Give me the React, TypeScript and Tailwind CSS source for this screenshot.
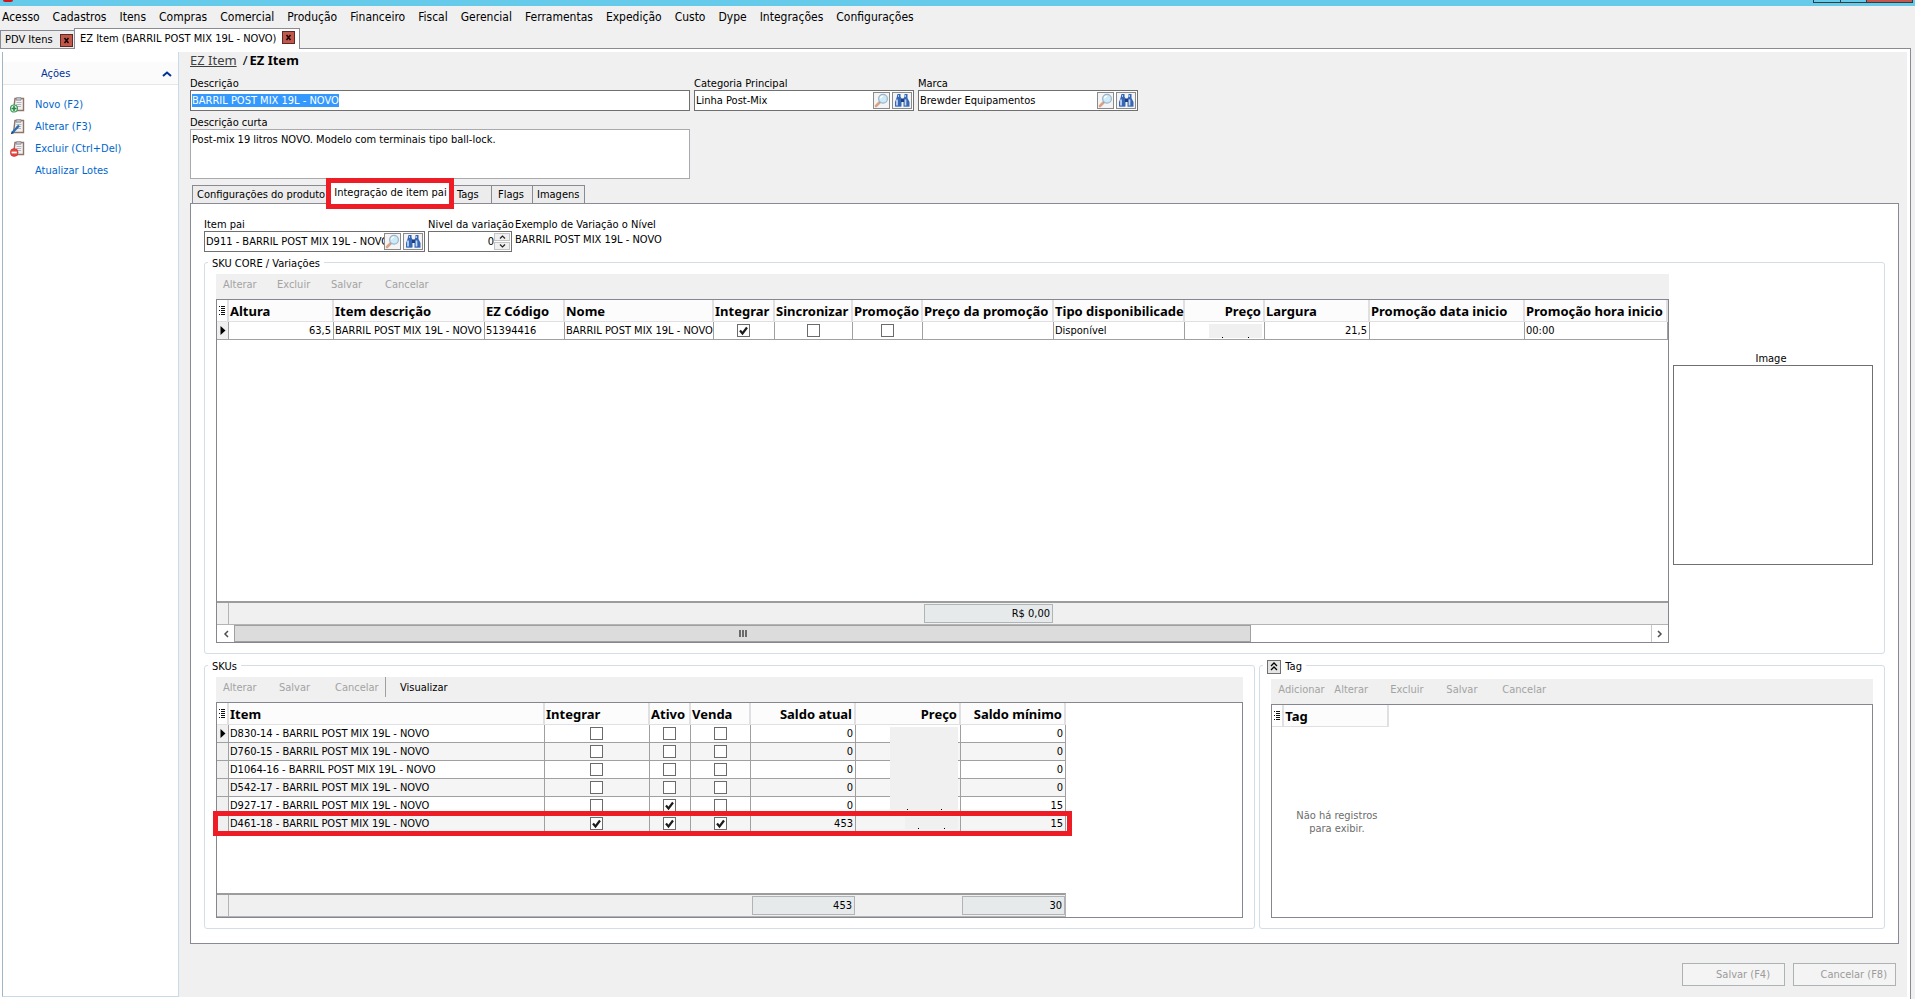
import { useEffect, useRef, useState } from 'react';
import type { ReactNode } from 'react';
import clsx from 'clsx';

const MENU = [
  'Acesso', 'Cadastros', 'Itens', 'Compras', 'Comercial', 'Produção', 'Financeiro', 'Fiscal',
  'Gerencial', 'Ferramentas', 'Expedição', 'Custo', 'Dype', 'Integrações', 'Configurações',
];

const ACTIONS: Array<{ label: string; icon?: 'add' | 'edit' | 'remove' }> = [
  { label: 'Novo (F2)', icon: 'add' },
  { label: 'Alterar (F3)', icon: 'edit' },
  { label: 'Excluir (Ctrl+Del)', icon: 'remove' },
  { label: 'Atualizar Lotes' },
];

type Sku = {
  item: string;
  integrar: boolean;
  ativo: boolean;
  venda: boolean;
  saldo: number;
  minimo: number;
};

const SKUS: Sku[] = [
  { item: 'D830-14 - BARRIL POST MIX 19L - NOVO', integrar: false, ativo: false, venda: false, saldo: 0, minimo: 0 },
  { item: 'D760-15 - BARRIL POST MIX 19L - NOVO', integrar: false, ativo: false, venda: false, saldo: 0, minimo: 0 },
  { item: 'D1064-16 - BARRIL POST MIX 19L - NOVO', integrar: false, ativo: false, venda: false, saldo: 0, minimo: 0 },
  { item: 'D542-17 - BARRIL POST MIX 19L - NOVO', integrar: false, ativo: false, venda: false, saldo: 0, minimo: 0 },
  { item: 'D927-17 - BARRIL POST MIX 19L - NOVO', integrar: false, ativo: true, venda: false, saldo: 0, minimo: 15 },
  { item: 'D461-18 - BARRIL POST MIX 19L - NOVO', integrar: true, ativo: true, venda: true, saldo: 453, minimo: 15 },
];

function ClipboardIcon({ kind }: { kind: 'add' | 'edit' | 'remove' }) {
  return (
    <svg width="15" height="16" viewBox="0 0 15 16" aria-hidden="true">
      <path d="M5 1.500h8.500v12H3.500z" fill="#f1f1f2" stroke="#8f7468" strokeWidth="1.400" />
      <path d="M6.500.6h4.500v2.600H6z" fill="#c3c3c8" stroke="#85858c" strokeWidth=".7" />
      <path d="M6.500 5.500h5M6.200 7.500h5M6 9.500h5" stroke="#b4b4ba" />
      {kind === 'add' && (
        <>
          <circle cx="4" cy="11.500" r="3.500" fill="#e9f7ec" stroke="#3f9a58" strokeWidth="1.200" />
          <path d="M4 9v5M1.500 11.500h5" stroke="#1f8a40" strokeWidth="1.600" />
        </>
      )}
      {kind === 'edit' && (
        <>
          <path d="M2.500 13.500L9 6.500" stroke="#2a6fb5" strokeWidth="2.400" />
          <path d="M.8 15.300l1-3 2 2z" fill="#16365c" />
        </>
      )}
      {kind === 'remove' && (
        <>
          <circle cx="4.200" cy="11.500" r="3.900" fill="#e5463f" stroke="#c42a26" strokeWidth=".6" />
          <path d="M1.600 11.500h5.200" stroke="#fff" strokeWidth="1.800" />
        </>
      )}
    </svg>
  );
}

function MagnifierIcon() {
  return (
    <svg width="15" height="15" viewBox="0 0 15 15" aria-hidden="true">
      <path d="M2 13l4-4" stroke="#d8a488" strokeWidth="2.600" strokeLinecap="round" />
      <path d="M5.500 9.500l1-1" stroke="#8d8d95" strokeWidth="1.600" />
      <circle cx="9" cy="5.800" r="4.400" fill="#cdeaf8" stroke="#9db4c8" strokeWidth="1.200" />
      <path d="M6.500 5.500a2.600 2.600 0 0 1 2.500-2.300" stroke="#fff" fill="none" strokeWidth="1.200" />
    </svg>
  );
}

function BinocularsIcon() {
  return (
    <svg width="17" height="15" viewBox="0 0 17 15" aria-hidden="true">
      <path d="M3.500 1h3v2.500l1 2v8h-6.500V9l1.500-4z" fill="#3766b4" />
      <path d="M10.500 1h3v4L15.500 9v4.500H9.500v-8l1-2z" fill="#3766b4" />
      <path d="M7 5.500h3v3.500H7z" fill="#1d3f80" />
      <path d="M3 6.500v6M11.500 6.500v6" stroke="#c3daf7" strokeWidth="1.700" />
      <path d="M4.500 2v2M11.500 2v2" stroke="#a9c6ef" />
      <path d="M1.500 13.500h5.500M9.800 13.500h5.400" stroke="#6b93cf" />
    </svg>
  );
}

function MenuLinesIcon() {
  return (
    <svg width="7" height="11" viewBox="0 0 7 11" className="mx-auto" aria-hidden="true">
      <path d="M0 1.500h1M0 5.500h1M0 9.500h1M2 1.500h4M2 3.500h4M2 5.500h4M2 7.500h4M2 9.500h4" stroke="#111" />
    </svg>
  );
}

function RowPointer() {
  return (
    <svg width="6" height="9" viewBox="0 0 6 9" className="mx-auto" aria-hidden="true">
      <path d="M0.500 0v9L5.500 4.500z" fill="#000" />
    </svg>
  );
}

function CheckCell({ label, checked }: { label: string; checked: boolean }) {
  const [on, setOn] = useState(checked);
  return (
    <span className="mx-auto grid h-[13px] w-[13px]">
      <input
        type="checkbox"
        aria-label={label}
        checked={on}
        onChange={(e) => setOn(e.target.checked)}
        className="col-start-1 row-start-1 h-[13px] w-[13px] appearance-none border border-[#6b6b6b] bg-white"
      />
      {on && (
        <svg viewBox="0 0 13 13" className="pointer-events-none col-start-1 row-start-1 h-[13px] w-[13px]" aria-hidden="true">
          <path d="M3 6.500l2.500 3 4.500-6" fill="none" stroke="#1c1c1c" strokeWidth="2.200" />
        </svg>
      )}
    </span>
  );
}

function FieldLabel({ htmlFor, children }: { htmlFor: string; children: ReactNode }) {
  return (
    <label htmlFor={htmlFor} className="h-3.5 leading-4 whitespace-nowrap">
      {children}
    </label>
  );
}

function LookupField({ id, label, value, className }: { id: string; label: string; value: string; className?: string }) {
  return (
    <div className={clsx('flex flex-col', className)}>
      <FieldLabel htmlFor={id}>{label}</FieldLabel>
      <div className="flex h-[21px] items-center border border-[#707070] bg-white pr-px">
        <input id={id} defaultValue={value} className="h-full min-w-0 flex-1 pl-px outline-none" />
        <button type="button" aria-label={`Pesquisar ${label}`} className="flex h-[17px] w-[17px] items-center justify-center border border-[#8a8a8a] bg-[#f4f4f4]">
          <MagnifierIcon />
        </button>
        <button type="button" aria-label={`Localizar ${label}`} className="ml-0.5 flex h-[17px] w-5 items-center justify-center border border-[#8a8a8a] bg-[#f4f4f4]">
          <BinocularsIcon />
        </button>
      </div>
    </div>
  );
}

function ToolbarButton({ children, className = 'w-14', disabled = true }: { children: ReactNode; className?: string; disabled?: boolean }) {
  return (
    <button
      type="button"
      disabled={disabled}
      className={clsx('text-left leading-[22px] whitespace-nowrap text-black disabled:text-[#a3a3a3]', className)}
    >
      {children}
    </button>
  );
}

function Toolbar({ children }: { children: ReactNode }) {
  return <div className="flex h-[25px] shrink-0 items-start bg-[#f0f0f0] pl-[7px]">{children}</div>;
}

function Th({ children, right }: { children?: ReactNode; right?: boolean }) {
  return (
    <th
      className={clsx(
        "h-[22px] border-r-2 border-b border-[#e0e0e2] bg-[#fcfcfc] pr-0.5 pl-px font-['Noto_Sans',sans-serif] text-[13px] leading-5 font-bold whitespace-nowrap",
        right ? 'text-right' : 'text-left',
      )}
    >
      {children}
    </th>
  );
}

function Td({ children, right }: { children?: ReactNode; right?: boolean }) {
  return (
    <td className={clsx('h-[18px] overflow-hidden border-r border-b border-[#a0a0a0] pr-0.5 pl-px leading-[17px] whitespace-nowrap', right && 'text-right')}>
      {children}
    </td>
  );
}

function SumBox({ children, className }: { children: ReactNode; className: string }) {
  return (
    <output className={clsx('block h-[19px] border border-[#b0b4b6] bg-[#e6eaeb] pr-0.5 text-right leading-[18px]', className)}>
      {children}
    </output>
  );
}

function CloseButton({ label }: { label: string }) {
  return (
    <button type="button" aria-label={label} className="flex h-[13px] w-[13px] items-center justify-center border border-[#5c2a24] bg-[#c2574b]">
      <svg width="7" height="7" viewBox="0 0 7 7" aria-hidden="true">
        <path d="M1.500 1l4 5M5.500 1l-4 5" stroke="#1a0a08" strokeWidth="1.600" />
      </svg>
    </button>
  );
}

function Sidebar() {
  return (
    <aside className="flex w-[177px] shrink-0 flex-col border-r border-b border-l border-[#c8dbe8] border-l-[#9fb6c6] bg-white pt-2.5">
      <div className="flex h-[23px] items-center justify-between border-b border-[#e6e6e8] bg-[#fbfbfc] pt-0.5 pr-1.5 pl-[38px] text-[#003399]">
        <span>Ações</span>
        <button type="button" aria-label="Recolher ações">
          <svg width="10" height="6" viewBox="0 0 10 6" aria-hidden="true">
            <path d="M1 5l4-3.500L9 5" fill="none" stroke="#003399" strokeWidth="2" />
          </svg>
        </button>
      </div>
      <ul className="mt-[9px] text-[#0066cc]">
        {ACTIONS.map((action) => (
          <li key={action.label}>
            <button type="button" className="flex h-[22px] items-center">
              <span className="flex w-8 pl-[7px]">{action.icon && <ClipboardIcon kind={action.icon} />}</span>
              {action.label}
            </button>
          </li>
        ))}
      </ul>
    </aside>
  );
}

function CoreGrid() {
  return (
    <div className="flex min-h-[340px] flex-1 flex-col overflow-hidden border border-[#868690] bg-white">
      <div className="flex-1">
        <table className="w-full table-fixed border-separate border-spacing-0">
          <colgroup>
            <col className="w-3" />
            <col className="w-[105px]" />
            <col className="w-[151px]" />
            <col className="w-[80px]" />
            <col className="w-[149px]" />
            <col className="w-[61px]" />
            <col className="w-[78px]" />
            <col className="w-[70px]" />
            <col className="w-[131px]" />
            <col className="w-[131px]" />
            <col className="w-[80px]" />
            <col className="w-[105px]" />
            <col className="w-[155px]" />
            <col />
          </colgroup>
          <thead>
            <tr>
              <th className="border-r-2 border-b border-[#e0e0e2]" aria-label="Colunas"><MenuLinesIcon /></th>
              <Th>Altura</Th>
              <Th>Item descrição</Th>
              <Th>EZ Código</Th>
              <Th>Nome</Th>
              <Th>Integrar</Th>
              <Th>Sincronizar</Th>
              <Th>Promoção</Th>
              <Th>Preço da promoção</Th>
              <Th>Tipo disponibilicade</Th>
              <Th right>Preço</Th>
              <Th>Largura</Th>
              <Th>Promoção data inicio</Th>
              <Th>Promoção hora inicio</Th>
            </tr>
          </thead>
          <tbody>
            <tr>
              <td className="border-r border-b border-[#a0a0a0] bg-[#f0f0f0]"><RowPointer /></td>
              <Td right>63,5</Td>
              <Td>BARRIL POST MIX 19L - NOVO</Td>
              <Td>51394416</Td>
              <Td>BARRIL POST MIX 19L - NOVO</Td>
              <Td><CheckCell label="Integrar" checked /></Td>
              <Td><CheckCell label="Sincronizar" checked={false} /></Td>
              <Td><CheckCell label="Promoção" checked={false} /></Td>
              <Td />
              <Td>Disponível</Td>
              <Td>
                {/* price is masked, only the tails of the separators stay visible */}
                <span className="ml-auto flex h-3.5 w-[53px] items-end justify-around bg-[#f0f0f0]">
                  <i className="h-px w-px bg-black" />
                  <i className="h-px w-px bg-black" />
                </span>
              </Td>
              <Td right>21,5</Td>
              <Td />
              <Td>00:00</Td>
            </tr>
          </tbody>
        </table>
      </div>
      <div className="flex h-6 border-t-2 border-b border-t-[#9c9c9c] border-b-[#b4b4b4] bg-[#f0f0f0]">
        <div className="w-3 border-r border-[#b4b4b4]" />
        <div className="flex w-[824px] items-center justify-end">
          <SumBox className="w-[129px]">R$ 0,00</SumBox>
        </div>
      </div>
      <div className="flex h-[17px] bg-white">
        <button type="button" aria-label="Rolar para a esquerda" className="flex w-[17px] items-center justify-center">
          <svg width="6" height="8" viewBox="0 0 6 8" aria-hidden="true">
            <path d="M5 1L2 4l3 3" fill="none" stroke="#505050" strokeWidth="1.500" />
          </svg>
        </button>
        <div className="grid flex-1 grid-cols-[28fr_11fr]">
          <div className="flex items-center justify-center gap-px border border-[#a0a0a0] bg-[#dcdcdc]">
            <i className="h-[7px] w-0.5 bg-[#6a6a6a]" />
            <i className="h-[7px] w-0.5 bg-[#6a6a6a]" />
            <i className="h-[7px] w-0.5 bg-[#6a6a6a]" />
          </div>
        </div>
        <button type="button" aria-label="Rolar para a direita" className="flex w-[17px] items-center justify-center border-l border-[#c8c8c8]">
          <svg width="6" height="8" viewBox="0 0 6 8" aria-hidden="true">
            <path d="M1 1l3 3-3 3" fill="none" stroke="#505050" strokeWidth="1.500" />
          </svg>
        </button>
      </div>
    </div>
  );
}

function SkuGrid() {
  return (
    <div className="flex min-h-[216px] flex-1 border border-[#868690] bg-white">
      <div className="relative flex w-[849px] flex-col justify-between">
        <table className="w-full table-fixed border-separate border-spacing-0">
          <colgroup>
            <col className="w-3" />
            <col />
            <col className="w-[105px]" />
            <col className="w-[41px]" />
            <col className="w-[60px]" />
            <col className="w-[105px]" />
            <col className="w-[105px]" />
            <col className="w-[105px]" />
          </colgroup>
          <thead>
            <tr>
              <th className="border-r-2 border-b border-[#e0e0e2]" aria-label="Colunas"><MenuLinesIcon /></th>
              <Th>Item</Th>
              <Th>Integrar</Th>
              <Th>Ativo</Th>
              <Th>Venda</Th>
              <Th right>Saldo atual</Th>
              <Th right>Preço</Th>
              <Th right>Saldo mínimo</Th>
            </tr>
          </thead>
          <tbody>
            {SKUS.map((sku, i) => (
              <tr key={sku.item} className="even:bg-[#f5f5f5]">
                <td className="border-r border-b border-[#a0a0a0] bg-[#f0f0f0]">{i === 0 && <RowPointer />}</td>
                <Td>{sku.item}</Td>
                <Td><CheckCell label={`Integrar ${sku.item}`} checked={sku.integrar} /></Td>
                <Td><CheckCell label={`Ativo ${sku.item}`} checked={sku.ativo} /></Td>
                <Td><CheckCell label={`Venda ${sku.item}`} checked={sku.venda} /></Td>
                <Td right>{sku.saldo}</Td>
                <Td />
                <Td right>{sku.minimo}</Td>
              </tr>
            ))}
          </tbody>
        </table>
        <div className="flex h-6 items-center border-t-2 border-r border-b border-t-[#9c9c9c] border-r-[#b4b4b4] border-b-[#b4b4b4] bg-[#f0f0f0]">
          <div className="h-full w-3 border-r border-[#b4b4b4]" />
          <div className="flex-1" />
          <SumBox className="w-[103px]">453</SumBox>
          <div className="w-[107px]" />
          <SumBox className="w-[103px]">30</SumBox>
        </div>
        {/* masked prices */}
        <div className="absolute top-6 right-[108px] flex h-[83px] w-[68px] items-end justify-around bg-[#f0f0f0]">
          <i className="h-px w-px bg-black" />
          <i className="h-px w-px bg-black" />
        </div>
        <div className="absolute top-[114px] right-[108px] flex h-3 w-[53px] items-end justify-around bg-[#f0f0f0]">
          <i className="h-px w-px bg-black" />
          <i className="h-px w-px bg-black" />
        </div>
        {/* highlight around the last SKU */}
        <div className="pointer-events-none absolute top-[108px] -right-[6px] -left-1 h-[25px] border-5 border-[#ee1c25]" />
      </div>
    </div>
  );
}

function TagGrid() {
  return (
    <div className="flex flex-1 border border-[#868690] bg-white">
      <div className="flex w-[117px] flex-col">
        <table className="w-full table-fixed border-separate border-spacing-0">
          <colgroup>
            <col className="w-3" />
            <col />
          </colgroup>
          <thead>
            <tr>
              <th className="border-r-2 border-b border-[#e0e0e2]" aria-label="Colunas"><MenuLinesIcon /></th>
              <Th>Tag</Th>
            </tr>
          </thead>
        </table>
        <p className="flex flex-1 items-center pl-3 text-center leading-[13px] text-[#6d6d6d]">
          Não há registros para exibir.
        </p>
      </div>
    </div>
  );
}

function Group({ legend, children, className }: { legend: ReactNode; children: ReactNode; className?: string }) {
  return (
    <fieldset className={clsx('flex min-w-0 flex-col rounded-[3px] border border-[#d3dee6] px-[11px] pb-2.5', className)}>
      <legend className="-ml-2 h-[15px] px-1 leading-[17px]">{legend}</legend>
      {children}
    </fieldset>
  );
}

function FormTab({ children, className }: { children: ReactNode; className: string }) {
  return (
    <button type="button" role="tab" className={clsx('h-[18px] border border-b-0 border-[#8a8a94] bg-[#ececec] text-left leading-[18px] whitespace-nowrap', className)}>
      {children}
    </button>
  );
}

export default function App() {
  const descricao = useRef<HTMLInputElement>(null);

  useEffect(() => {
    descricao.current?.focus();
    descricao.current?.select();
  }, []);

  return (
    <div className="flex min-h-screen flex-col bg-[#f0f0f0] font-['DejaVu_Sans_Condensed','DejaVu_Sans',sans-serif] text-[11px] text-black">
      <header className="flex h-1.5 items-start justify-between overflow-hidden bg-[#66cbea]">
        <i className="ml-[3px] h-0.5 w-2.5 rounded-b-full bg-[#d01818]" />
        <div className="mr-0.5 flex h-[3px] border border-t-0 border-[#3a3a3a]">
          <i className="w-[27px] border-r border-[#3a3a3a]" />
          <i className="w-[26px] border-r border-[#3a3a3a]" />
          <i className="w-[45px] bg-[#c2574b]" />
        </div>
      </header>

      <nav className="flex h-[22px] items-center gap-[13px] pl-0.5 text-[12px] leading-5">
        {MENU.map((item) => (
          <button key={item} type="button">{item}</button>
        ))}
      </nav>

      <div role="tablist" className="flex h-5 shrink-0 items-end">
        <div role="tab" className="flex h-[18px] w-[74px] items-center justify-between border border-r-0 border-b-0 border-[#8a8a94] bg-[#ececec] pt-px pr-px pl-1">
          PDV Itens
          <CloseButton label="Fechar PDV Itens" />
        </div>
        <div role="tab" aria-selected="true" className="relative -mb-px flex h-[21px] w-[226px] items-start justify-between border border-b-0 border-[#8a8a94] bg-white pt-0.5 pr-1 pl-[5px] leading-4">
          EZ Item (BARRIL POST MIX 19L - NOVO)
          <CloseButton label="Fechar EZ Item" />
        </div>
      </div>

      <div className="mr-1 flex flex-1 border-t border-r border-[#8a8a94] bg-white pt-[3px] pr-[3px] pb-0.5 pl-0.5">
        <Sidebar />

        <main className="flex min-w-0 flex-1 flex-col bg-[#f0f0f0] pr-2 pb-[11px] pl-[11px]">
          <h1 className="flex h-[18px] items-center gap-0.5 font-['Noto_Sans',sans-serif] text-[13px]">
            <a href="#ez-item" className="pr-1 text-[#404040] underline">EZ Item</a>
            <span>/</span>
            <span className="font-bold">EZ Item</span>
          </h1>

          <div className="mt-1.5 flex gap-1">
            <div className="flex w-[500px] flex-col">
              <FieldLabel htmlFor="descricao">Descrição</FieldLabel>
              <input
                id="descricao"
                ref={descricao}
                defaultValue="BARRIL POST MIX 19L - NOVO"
                className="h-[21px] border border-[#707070] bg-white px-px outline-none selection:bg-[#3399ff] selection:text-white"
              />
            </div>
            <LookupField id="categoria" label="Categoria Principal" value="Linha Post-Mix" className="w-[220px]" />
            <LookupField id="marca" label="Marca" value="Brewder Equipamentos" className="w-[220px]" />
          </div>

          <div className="mt-1 flex w-[500px] flex-col">
            <FieldLabel htmlFor="curta">Descrição curta</FieldLabel>
            <textarea
              id="curta"
              defaultValue="Post-mix 19 litros NOVO. Modelo com terminais tipo ball-lock."
              className="h-[50px] resize-none border border-[#a9a9ae] bg-white px-px py-0.5 leading-[15px] outline-none"
            />
          </div>

          <div role="tablist" className="mt-[3px] flex h-[21px] items-end pl-0.5">
            <FormTab className="w-[135px] pl-1">Configurações do produto</FormTab>
            <div className="relative -mb-px h-[22px] w-[126px] bg-white">
              <button type="button" role="tab" aria-selected="true" className="w-full pl-px leading-[22px] whitespace-nowrap">
                Integração de item pai
              </button>
              <div className="pointer-events-none absolute -inset-x-px -top-1 -bottom-[5px] border-5 border-[#ee1c25]" />
            </div>
            <FormTab className="w-[39px] border-l-0 pl-1">Tags</FormTab>
            <FormTab className="w-[41px] border-l-0 pl-1.5">Flags</FormTab>
            <FormTab className="w-[52px] border-l-0 pl-1">Imagens</FormTab>
          </div>

          <section className="flex flex-1 flex-col border border-[#8a8a94] bg-white px-[13px] pt-[13px] pb-3.5">
            <div className="flex gap-[3px]">
              <LookupField id="item-pai" label="Item pai" value="D911 - BARRIL POST MIX 19L - NOVO" className="w-[221px]" />
              <div className="flex w-[84px] flex-col">
                <FieldLabel htmlFor="nivel">Nivel da variação</FieldLabel>
                <div className="flex h-[21px] items-center border border-[#707070] bg-white pr-px">
                  <input id="nivel" defaultValue="0" className="h-full min-w-0 flex-1 text-right outline-none" />
                  <div className="flex w-4 flex-col gap-px">
                    <button type="button" aria-label="Aumentar nível" className="flex h-2 items-center justify-center border border-[#c4c4c4] bg-[#f0f0f0]">
                      <svg width="7" height="4" viewBox="0 0 7 4" aria-hidden="true"><path d="M1 3.500l2.500-2.500L6 3.500" fill="none" stroke="#222" strokeWidth="1.200" /></svg>
                    </button>
                    <button type="button" aria-label="Diminuir nível" className="flex h-2 items-center justify-center border border-[#c4c4c4] bg-[#f0f0f0]">
                      <svg width="7" height="4" viewBox="0 0 7 4" aria-hidden="true"><path d="M1 .5L3.500 3 6 .5" fill="none" stroke="#222" strokeWidth="1.200" /></svg>
                    </button>
                  </div>
                </div>
              </div>
              <div className="leading-[15px]">
                <div>Exemplo de Variação o Nível</div>
                <div>BARRIL POST MIX 19L - NOVO</div>
              </div>
            </div>

            <Group legend="SKU CORE / Variações" className="mt-[3px] flex-1">
              <div className="flex flex-1 gap-1 pt-1">
                <div className="flex min-w-0 flex-1 flex-col">
                  <Toolbar>
                    <ToolbarButton className="w-[54px]">Alterar</ToolbarButton>
                    <ToolbarButton className="w-[54px]">Excluir</ToolbarButton>
                    <ToolbarButton className="w-[54px]">Salvar</ToolbarButton>
                    <ToolbarButton className="w-[54px]">Cancelar</ToolbarButton>
                  </Toolbar>
                  <CoreGrid />
                </div>
                <figure className="w-[200px] pt-[77px]">
                  <figcaption className="h-3.5 pr-1 text-center leading-4">Image</figcaption>
                  <div className="h-[200px] border border-[#707070] bg-white" />
                </figure>
              </div>
            </Group>

            <div className="mt-1 grid grid-cols-[1052fr_626fr] gap-1">
              <Group legend="SKUs">
                <div className="flex flex-1 flex-col pt-1">
                  <Toolbar>
                    <ToolbarButton>Alterar</ToolbarButton>
                    <ToolbarButton>Salvar</ToolbarButton>
                    <ToolbarButton className="w-[50px]">Cancelar</ToolbarButton>
                    <span className="mr-3.5 h-5 w-px bg-[#a0a0a0]" />
                    <ToolbarButton disabled={false}>Visualizar</ToolbarButton>
                  </Toolbar>
                  <SkuGrid />
                </div>
              </Group>
              <Group
                legend={
                  <span className="flex items-center gap-1">
                    <button type="button" aria-label="Recolher Tag" className="flex h-3.5 w-3.5 items-center justify-center border border-[#707070] bg-[#e4e4e4]">
                      <svg width="8" height="9" viewBox="0 0 8 9" aria-hidden="true">
                        <path d="M1 4l3-3 3 3M1 8l3-3 3 3" fill="none" stroke="#000" strokeWidth="1.300" />
                      </svg>
                    </button>
                    Tag
                  </span>
                }
              >
                <div className="flex flex-1 flex-col pt-1.5">
                  <Toolbar>
                    <ToolbarButton>Adicionar</ToolbarButton>
                    <ToolbarButton>Alterar</ToolbarButton>
                    <ToolbarButton>Excluir</ToolbarButton>
                    <ToolbarButton>Salvar</ToolbarButton>
                    <ToolbarButton>Cancelar</ToolbarButton>
                  </Toolbar>
                  <TagGrid />
                </div>
              </Group>
            </div>
          </section>

          <footer className="mt-[19px] flex justify-end gap-2 pr-[3px]">
            <button type="button" disabled className="h-[23px] w-[103px] border border-[#adb2b5] bg-[#f4f4f4] pt-px pr-3.5 text-right text-[#9b9b9b]">
              Salvar (F4)
            </button>
            <button type="button" disabled className="h-[23px] w-[103px] border border-[#adb2b5] bg-[#f4f4f4] pt-px pr-2 text-right text-[#9b9b9b]">
              Cancelar (F8)
            </button>
          </footer>
        </main>
      </div>
    </div>
  );
}
